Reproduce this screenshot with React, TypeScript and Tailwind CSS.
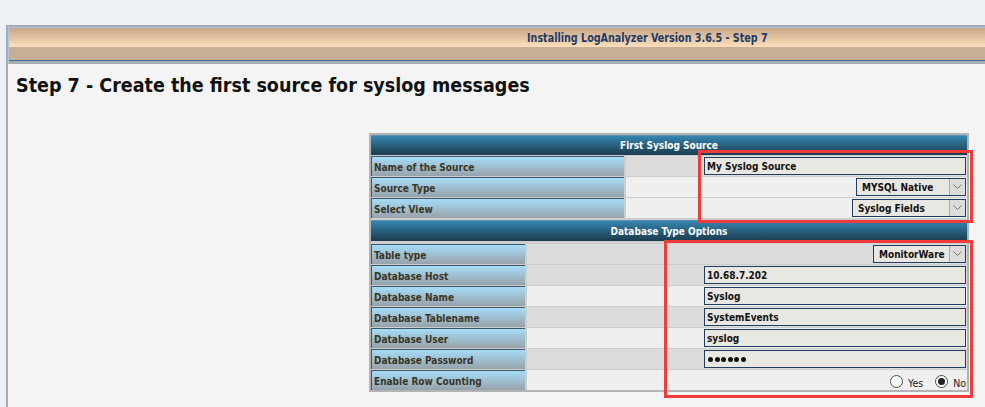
import React from 'react';

const font = "font-['DejaVu_Sans_Condensed','DejaVu_Sans',sans-serif]";

const Header = ({ children, className = '' }) => (
  <div className={`h-[20px] flex items-center justify-center bg-linear-to-b from-[#3586b0] to-[#1b3c4e] border-t border-[#5d93b3] text-white font-bold text-[10px] ${className}`}>
    {children}
  </div>
);

const Label = ({ children, wide }) => (
  <div className={`${wide ? 'w-[253px]' : 'w-[154px]'} h-[20px] shrink-0 flex items-center pl-[2px] pt-[2px] border-t border-l border-[#3f5664] bg-linear-to-b from-[#a4ddf8] to-[#97a2aa] text-[10px] font-bold text-[#3a3526]`}>
    {children}
  </div>
);

const TextInput = ({ children }) => (
  <div className="w-[262px] h-[18px] flex items-center pl-[2px] border border-[#1f3d5f] bg-[#e9e7e2] text-[10px] font-bold text-[#111]">
    {children}
  </div>
);

const Select = ({ value, width }) => (
  <div className={`${width} h-[18px] flex items-center border border-[#1f3d5f] bg-[#e9e7e2]`}>
    <span className="flex-1 pl-[5px] text-[10px] font-bold text-[#111]">{value}</span>
    <span className="w-[16px] h-full flex items-center justify-center border-l border-[#a9a9a9] bg-[#dcdcdc]">
      <svg width="9" height="6" viewBox="0 0 9 6"><path d="M0.5 0.5 L4.5 4.5 L8.5 0.5" fill="none" stroke="#777" strokeWidth="1" /></svg>
    </span>
  </div>
);

const Row = ({ label, wide, dark, children }) => (
  <div className="flex gap-[2px]">
    <Label wide={wide}>{label}</Label>
    <div className={`flex-1 h-[20px] flex items-center justify-end pr-[1px] ${dark ? 'bg-[#dcdcdc]' : 'bg-[#efefef]'}`}>
      {children}
    </div>
  </div>
);

const Radio = ({ checked }) => (
  <span className="w-[13px] h-[13px] rounded-full border border-[#4d4d4d] bg-white flex items-center justify-center">
    {checked && <span className="w-[7px] h-[7px] rounded-full bg-[#222]" />}
  </span>
);

export default function App() {
  return (
    <div className={`relative w-[985px] h-[407px] overflow-hidden bg-[#edf0f5] ${font}`}>
      <div className="h-[25px]" />
      <div className="ml-[6px] h-[382px] border-l-2 border-t-2 border-[#a8acb3] bg-[#f4f4f4]">
        <div className="border-t border-l border-[#a9c6e3]">
          <div className="h-[19px] flex items-center pl-[518px] bg-linear-to-b from-[#c6a687] to-[#fde0bb]">
            <span className="inline-block origin-left scale-x-[0.82] whitespace-nowrap text-[13px] font-bold text-[#1e3a68]">
              Installing LogAnalyzer Version 3.6.5 - Step 7
            </span>
          </div>
          <div className="h-[13px] bg-[#c8ae96]" />
          <div className="h-[1px] bg-[#3b6a9c]" />
          <div className="h-[3px] bg-[#a8acb3]" />
        </div>

        <h1 className="mt-[9px] ml-[8px] text-[19.5px] leading-[26px] font-bold text-[#111]">
          Step 7 - Create the first source for syslog messages
        </h1>

        <div className="mt-[34px] ml-[361px] w-[600px] border-2 border-[#b3b3b3] bg-[#cdcdcd] flex flex-col gap-[1px]">
          <Header>First Syslog Source</Header>
          <Row label="Name of the Source" wide dark>
            <TextInput>My Syslog Source</TextInput>
          </Row>
          <Row label="Source Type" wide>
            <Select value="MYSQL Native" width="w-[110px]" />
          </Row>
          <Row label="Select View" wide>
            <Select value="Syslog Fields" width="w-[114px]" />
          </Row>

          <Header className="mt-[1px] h-[21px]">Database Type Options</Header>
          <div className="mt-[2px] flex flex-col gap-[1px]">
            <Row label="Table type" dark>
              <Select value="MonitorWare" width="w-[93px]" />
            </Row>
            <Row label="Database Host" dark>
              <TextInput>10.68.7.202</TextInput>
            </Row>
            <Row label="Database Name">
              <TextInput>Syslog</TextInput>
            </Row>
            <Row label="Database Tablename" dark>
              <TextInput>SystemEvents</TextInput>
            </Row>
            <Row label="Database User">
              <TextInput>syslog</TextInput>
            </Row>
            <Row label="Database Password" dark>
              <TextInput>
                <span className="flex gap-[1.5px] pl-[1px]">
                  {[0, 1, 2, 3, 4, 5].map(i => <span key={i} className="w-[5px] h-[5px] rounded-full bg-[#111]" />)}
                </span>
              </TextInput>
            </Row>
            <Row label="Enable Row Counting">
              <div className="flex items-end gap-[5px] pt-[3px] text-[10.5px] text-[#222]">
                <Radio />
                <span className="mr-[7px] leading-none">Yes</span>
                <Radio checked />
                <span className="leading-none">No</span>
              </div>
            </Row>
          </div>
        </div>
      </div>

      <div className="absolute left-[698px] top-[150px] w-[275px] h-[73px] border-[3px] border-[#f23c3c]" />
      <div className="absolute left-[664px] top-[240px] w-[309px] h-[158px] border-[3px] border-[#f23c3c]" />
    </div>
  );
}
